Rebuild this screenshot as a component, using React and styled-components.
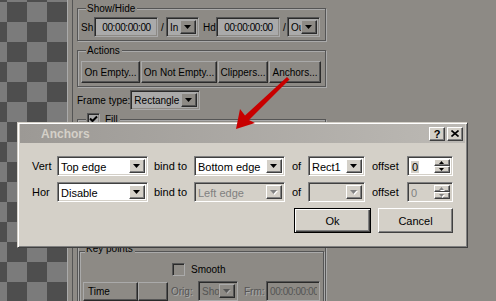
import React from "react";
import styled, { createGlobalStyle } from "styled-components";

const GlobalStyle = createGlobalStyle`
    html, body {
        margin: 0;
        padding: 0;
        width: 496px;
        height: 301px;
        overflow: hidden;
    }
    body {
        font-family: "Liberation Sans", Arial, sans-serif;
        font-size: 11px;
        color: #000;
    }
    * {
        box-sizing: border-box;
    }
`;

const Page = styled.div`
    position: relative;
    width: 496px;
    height: 301px;
    display: flex;
    background: #d4d0c8;
    overflow: hidden;
`;

const Checker = styled.div`
    flex: none;
    width: 67px;
    background-color: #b9b9b9;
    background-image: repeating-conic-gradient(#b9b9b9 0 25%, #767676 0 50%);
    background-size: 40px 40px;
    background-position: 7px 2px;
`;

const Splitter = styled.div`
    flex: none;
    width: 6px;
    border-left: 1px solid #fff;
    border-right: 1px solid #808080;
    background: #d4d0c8;
`;

const Panel = styled.div`
    flex: none;
    width: 253px;
    padding: 8px 0 0 4px;
    font-size: 10px;
    display: flex;
    flex-direction: column;
    align-items: flex-start;
`;

const Group = styled.div`
    width: ${p => p.$w}px;
    margin-top: ${p => p.$mt || 0}px;
    border: 1px solid #808080;
    box-shadow: inset 1px 1px #fff, 1px 1px #fff;
    padding: 0 ${p => p.$px ?? 3}px ${p => p.$pb ?? 3}px ${p => p.$px ?? 3}px;
    display: flex;
    flex-direction: column;
    align-items: flex-start;
`;

const Caption = styled.div`
    margin: ${p => p.$mt ?? -7}px 0 0 ${p => p.$ml ?? 5}px;
    padding: 0 2px 0 1px;
    height: 13px;
    line-height: 13px;
    background: #d4d0c8;
    display: flex;
    align-items: center;
    gap: 5px;
`;

const Row = styled.div`
    display: flex;
    align-items: center;
    gap: ${p => p.$gap || 0}px;
    margin-top: ${p => p.$mt || 0}px;
    margin-left: ${p => p.$ml || 0}px;
`;

const Label = styled.span`
    flex: none;
    width: ${p => (p.$w ? p.$w + "px" : "auto")};
    margin-left: ${p => p.$ml || 0}px;
    white-space: nowrap;
    color: ${p => (p.$disabled ? "#808080" : "#000")};
    text-shadow: ${p => (p.$disabled ? "1px 1px #fff" : "none")};
`;

const Field = styled.div`
    flex: none;
    display: flex;
    align-items: stretch;
    width: ${p => (p.$w ? p.$w + "px" : "100%")};
    height: ${p => p.$h || 20}px;
    border: 1px solid;
    border-color: #808080 #fff #fff #808080;
    box-shadow: inset 1px 1px #404040, inset -1px -1px #d4d0c8;
    padding: 2px;
    background: ${p => (p.$disabled ? "#d4d0c8" : "#fff")};
`;

const FieldText = styled.span`
    flex: 1;
    min-width: 0;
    overflow: hidden;
    white-space: nowrap;
    line-height: 16px;
    padding-left: 1px;
    letter-spacing: ${p => (p.$tight ? "-0.4px" : "normal")};
    text-align: ${p => (p.$center ? "center" : "left")};
    color: ${p => (p.$disabled ? "#808080" : "#000")};
`;

const Picked = styled.span`
    background: #d4d0c8;
    padding: 0 1px;
`;

const raised = `
    background: #d4d0c8;
    border: 1px solid;
    border-color: #fff #404040 #404040 #fff;
    box-shadow: inset -1px -1px #808080;
`;

const DropButton = styled.div`
    ${raised}
    flex: none;
    width: 16px;
    display: flex;
    align-items: center;
    justify-content: center;
`;

const SpinColumn = styled.div`
    flex: none;
    width: 16px;
    display: flex;
    flex-direction: column;
`;

const SpinButton = styled.div`
    ${raised}
    flex: 1;
    display: flex;
    align-items: center;
    justify-content: center;
`;

const Button = styled.div`
    ${raised}
    flex: none;
    width: ${p => p.$w}px;
    height: ${p => p.$h || 22}px;
    display: flex;
    align-items: center;
    justify-content: center;
    white-space: nowrap;
    ${p =>
        p.$default &&
        `
        border: 1px solid #000;
        box-shadow: inset 1px 1px #fff, inset -1px -1px #404040, inset -2px -2px #808080;
    `}
`;

const Check = styled.div`
    flex: none;
    width: 13px;
    height: 13px;
    border: 1px solid;
    border-color: #808080 #fff #fff #808080;
    box-shadow: inset 1px 1px #404040, inset -1px -1px #d4d0c8;
    background: ${p => (p.$grey ? "#d4d0c8" : "#fff")};
    display: flex;
    align-items: center;
    justify-content: center;
`;

const HeaderCell = styled.div`
    ${raised}
    flex: none;
    width: ${p => p.$w}px;
    height: 19px;
    padding-left: 4px;
    line-height: 17px;
`;

const Scrim = styled.div`
    position: absolute;
    inset: 0;
    background: rgba(0, 0, 0, 0.335);
`;

const Dialog = styled.div`
    position: absolute;
    left: 17px;
    top: 122px;
    width: 451px;
    height: 126px;
    background: #d4d0c8;
    border: 1px solid;
    border-color: #d4d0c8 #404040 #404040 #d4d0c8;
    box-shadow: inset 1px 1px #fff, inset -1px -1px #808080;
    padding: 1px 2px 2px 2px;
    display: flex;
    flex-direction: column;
`;

const TitleBar = styled.div`
    height: 19px;
    display: flex;
    align-items: center;
    padding: 0 2px 0 21px;
    background: linear-gradient(to right, #9c9995, #bcb9b4);
`;

const Title = styled.span`
    flex: 1;
    font-weight: bold;
    font-size: 12px;
    color: #d4d0c8;
`;

const TitleButton = styled.div`
    ${raised}
    width: 16px;
    height: 14px;
    margin-left: ${p => p.$ml || 0}px;
    display: flex;
    align-items: center;
    justify-content: center;
    font-weight: bold;
    font-size: 11px;
    line-height: 12px;
`;

const DialogBody = styled.div`
    padding: 13px 12px 0 12px;
    display: flex;
    flex-direction: column;
`;

const Form = styled.div`
    display: grid;
    grid-template-columns: 25px 91px 46px 91px 23px 57px 42px 46px;
    grid-auto-rows: 20px;
    row-gap: 6px;
    align-items: center;
`;

const Cell = styled.span`
    padding-left: ${p => p.$pl || 0}px;
    white-space: nowrap;
`;

const Footer = styled.div`
    display: flex;
    justify-content: flex-end;
    gap: 7px;
    margin-top: 6px;
`;

const Arrow = styled.svg`
    position: absolute;
    left: 0;
    top: 0;
    pointer-events: none;
`;

function Tri({ up, disabled, w = 7, h = 4 }) {
    const pts = up ? `0,${h} ${w / 2},0 ${w},${h}` : `0,0 ${w},0 ${w / 2},${h}`;
    return (
        <svg width={w + 1} height={h + 1} viewBox={`0 0 ${w + 1} ${h + 1}`}>
            {disabled && <polygon points={pts} fill="#fff" transform="translate(1,1)" />}
            <polygon points={pts} fill={disabled ? "#808080" : "#000"} />
        </svg>
    );
}

function Combo({ value, w, disabled }) {
    return (
        <Field $w={w} $disabled={disabled}>
            <FieldText $disabled={disabled}>{value}</FieldText>
            <DropButton>
                <Tri disabled={disabled} />
            </DropButton>
        </Field>
    );
}

function Spin({ value, disabled }) {
    return (
        <Field $disabled={disabled}>
            <FieldText $disabled={disabled}>{disabled ? value : <Picked>{value}</Picked>}</FieldText>
            <SpinColumn>
                <SpinButton><Tri up w={5} h={3} disabled={disabled} /></SpinButton>
                <SpinButton><Tri w={5} h={3} disabled={disabled} /></SpinButton>
            </SpinColumn>
        </Field>
    );
}

function Tick() {
    return (
        <svg width="9" height="9" viewBox="0 0 9 9">
            <path d="M1 3.5 L3.5 6 L8 1.5" stroke="#000" strokeWidth="2" fill="none" />
        </svg>
    );
}

function Background() {
    return (
        <>
            <Checker />
            <Splitter />
            <Panel>
                <Group $w={249}>
                    <Caption>Show/Hide</Caption>
                    <Row $mt={2}>
                        <Label $w={13}>Sh</Label>
                        <Field $w={64}><FieldText $center $tight>00:00:00:00</FieldText></Field>
                        <Label $ml={3} $w={5}>/</Label>
                        <Combo value="In" w={33} />
                        <Label $ml={4} $w={13}>Hd</Label>
                        <Field $w={64}><FieldText $center $tight>00:00:00:00</FieldText></Field>
                        <Label $ml={3} $w={4}>/</Label>
                        <Combo value="Out" w={33} />
                    </Row>
                </Group>
                <Group $w={249} $mt={9}>
                    <Caption>Actions</Caption>
                    <Row $mt={4} $gap={1}>
                        <Button $w={59}>On Empty...</Button>
                        <Button $w={76}>On Not Empty...</Button>
                        <Button $w={50}>Clippers...</Button>
                        <Button $w={52}>Anchors...</Button>
                    </Row>
                </Group>
                <Row $mt={3}>
                    <Label>Frame type:</Label>
                    <Combo value="Rectangle" w={70} />
                </Row>
                <Group $w={249} $mt={9} $pb={0} $px={1}>
                    <Caption $ml={7}>
                        <Check><Tick /></Check>
                        Fill
                    </Caption>
                    <Group $w={245} $mt={125} $pb={0}>
                        <Caption $mt={-10} $ml={2}>Key points</Caption>
                        <Row $mt={8} $ml={89} $gap={6}>
                            <Check $grey />
                            Smooth
                        </Row>
                        <Row $mt={5}>
                            <HeaderCell $w={55}>Time</HeaderCell>
                            <HeaderCell $w={30} />
                            <Label $ml={3} $w={27} $disabled>Orig:</Label>
                            <Combo value="Show" w={40} disabled />
                            <Label $ml={6} $w={22} $disabled>Frm:</Label>
                            <Field $w={54} $disabled>
                                <FieldText $disabled $tight>00:00:00:00</FieldText>
                            </Field>
                        </Row>
                    </Group>
                </Group>
            </Panel>
        </>
    );
}

function AnchorsDialog() {
    return (
        <Dialog>
            <TitleBar>
                <Title>Anchors</Title>
                <TitleButton>?</TitleButton>
                <TitleButton $ml={2}>
                    <svg width="8" height="7" viewBox="0 0 8 7">
                        <path d="M0.5 0.5 L7.5 6.5 M7.5 0.5 L0.5 6.5" stroke="#000" strokeWidth="1.6" />
                    </svg>
                </TitleButton>
            </TitleBar>
            <DialogBody>
                <Form>
                    <Cell>Vert</Cell>
                    <Combo value="Top edge" />
                    <Cell $pl={6}>bind to</Cell>
                    <Combo value="Bottom edge" />
                    <Cell $pl={7}>of</Cell>
                    <Combo value="Rect1" />
                    <Cell $pl={7}>offset</Cell>
                    <Spin value="0" />

                    <Cell>Hor</Cell>
                    <Combo value="Disable" />
                    <Cell $pl={6}>bind to</Cell>
                    <Combo value="Left edge" disabled />
                    <Cell $pl={7}>of</Cell>
                    <Combo value="" disabled />
                    <Cell $pl={7}>offset</Cell>
                    <Spin value="0" disabled />
                </Form>
                <Footer>
                    <Button $w={77} $h={25} $default>Ok</Button>
                    <Button $w={75} $h={25}>Cancel</Button>
                </Footer>
            </DialogBody>
        </Dialog>
    );
}

export default function App() {
    return (
        <Page>
            <GlobalStyle />
            <Background />
            <Scrim />
            <AnchorsDialog />
            <Arrow width="496" height="301" viewBox="0 0 496 301">
                <polygon
                    points="287,77 289.5,79.5 249,120 255,123 236,129 240,109 245,115.5"
                    fill="#c80000"
                />
            </Arrow>
        </Page>
    );
}
